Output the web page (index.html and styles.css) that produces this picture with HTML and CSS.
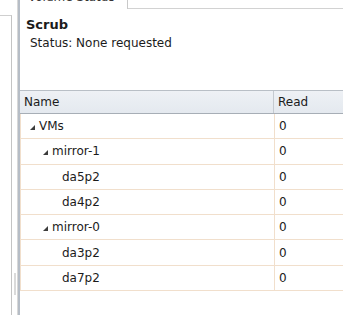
FILE: index.html
```html
<!DOCTYPE html>
<html lang="en">
<head>
  <meta charset="UTF-8" />
  <title>Volume Status</title>
  <link rel="stylesheet" href="styles.css">
</head>
<body>

  <div class="side"></div>

  <div class="splitter">
    <div class="thumb"></div>
  </div>

  <div class="main">
    <div class="tab-strip">
      <div class="tab"><span class="tab-label">Volume Status</span></div>
      <div class="strip-rest"></div>
    </div>

    <div class="panel">
      <div class="scrub">
        <h2>Scrub</h2>
        <p>Status: None requested</p>
      </div>

      <div class="grid">
        <div class="head">
          <div class="cell name">Name</div>
          <div class="cell read">Read</div>
        </div>

        <div class="row">
          <div class="cell name lvl0"><span class="arrow"></span>VMs</div>
          <div class="cell read">0</div>
        </div>
        <div class="row">
          <div class="cell name lvl1"><span class="arrow"></span>mirror-1</div>
          <div class="cell read">0</div>
        </div>
        <div class="row">
          <div class="cell name lvl2">da5p2</div>
          <div class="cell read">0</div>
        </div>
        <div class="row">
          <div class="cell name lvl2">da4p2</div>
          <div class="cell read">0</div>
        </div>
        <div class="row">
          <div class="cell name lvl1"><span class="arrow"></span>mirror-0</div>
          <div class="cell read">0</div>
        </div>
        <div class="row">
          <div class="cell name lvl2">da3p2</div>
          <div class="cell read">0</div>
        </div>
        <div class="row">
          <div class="cell name lvl2">da7p2</div>
          <div class="cell read">0</div>
        </div>
      </div>
    </div>
  </div>

</body>
</html>
```

FILE: styles.css
```css
body {
  margin: 0;
  height: 315px;
  overflow: hidden;
  display: flex;
  font-family: "DejaVu Sans", Verdana, sans-serif;
  font-size: 12px;
  color: #1b1b1b;
  background: #fff;
}

.side {
  width: 11px;
  margin-top: 15px;
  border-top: 1px solid #cfcfcf;
  border-right: 1px solid #c4c4c4;
}

.splitter {
  width: 5px;
}

.splitter .thumb {
  width: 2px;
  height: 22px;
  margin: 273px 0 0 2px;
  background: #dadada;
}

.main {
  flex: 1;
  border-left: 1px solid #d8d8d8;
  display: flex;
  flex-direction: column;
}

.tab-strip {
  display: flex;
  height: 9px;
  border-left: 2px solid #b6bdc6;
}

.tab {
  width: 99px;
  overflow: hidden;
  border-right: 1px solid #c9c9c9;
  padding-left: 8px;
}

.tab-label {
  display: block;
  margin-top: -9px;
  line-height: 12px;
  white-space: nowrap;
  color: #333;
}

.strip-rest {
  flex: 1;
  border-bottom: 1px solid #d2d2d2;
}

.panel {
  flex: 1;
  border-left: 2px solid #b6bdc6;
}

.scrub {
  padding-left: 6px;
}

.scrub h2 {
  margin: 8px 0 0;
  font-size: 13px;
  line-height: 16px;
  font-weight: bold;
}

.scrub p {
  margin: 3px 0 0 4px;
  line-height: 14px;
}

.grid {
  margin-top: 40px;
}

.head,
.row {
  display: grid;
  grid-template-columns: 254px 1fr;
}

.head {
  height: 22px;
  background: linear-gradient(#eef1f5, #e4e9ef);
  border-top: 1px solid #b9bfc6;
  border-bottom: 1px solid #a7aeb6;
}

.head .name {
  border-right: 1px solid #c5cad0;
}

.row {
  height: 24.3px;
  border-left: 1px solid #f1dfcc;
  border-bottom: 1px solid #f1dfcc;
}

.row .name {
  border-right: 1px solid #f1dfcc;
}

.cell {
  display: flex;
  align-items: center;
  white-space: nowrap;
}

.head .name {
  padding-left: 4px;
}

.row .read,
.head .read {
  padding-left: 4px;
}

.lvl0 {
  padding-left: 9px;
}

.lvl1 {
  padding-left: 22px;
}

.lvl2 {
  padding-left: 41px;
}

.arrow {
  width: 0;
  height: 0;
  border-left: 5px solid transparent;
  border-bottom: 5px solid #3c3c3c;
  margin: 3px 4px 0 0;
}
```
